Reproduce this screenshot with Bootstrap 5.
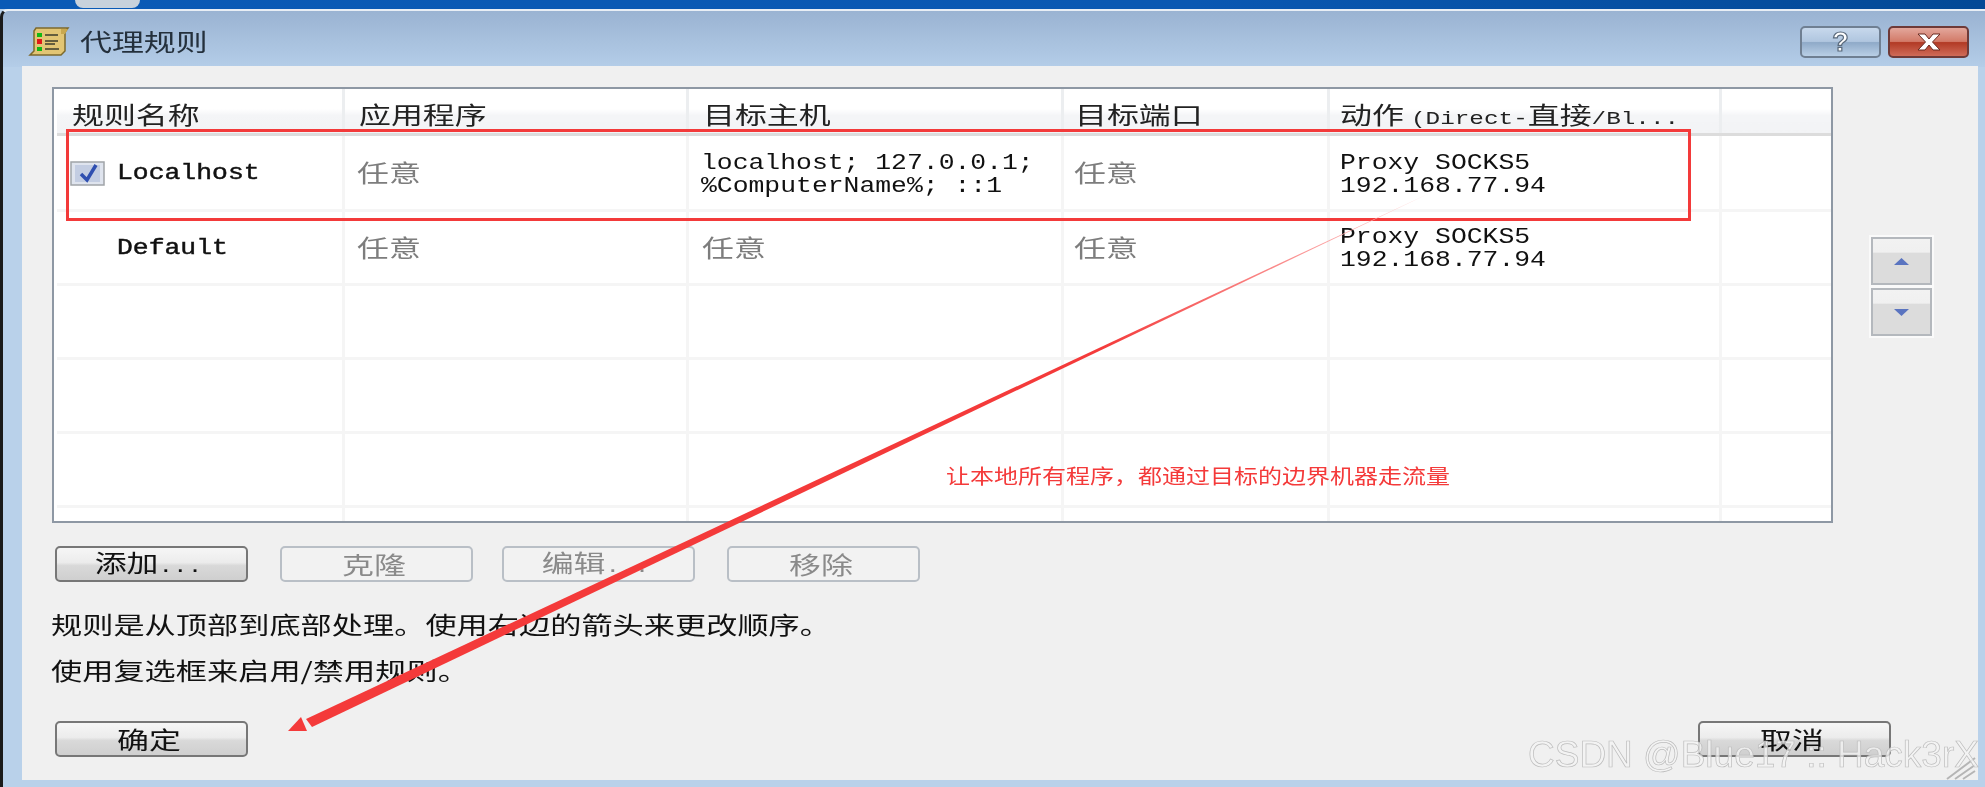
<!doctype html>
<html lang="zh"><head><meta charset="utf-8"><title>代理规则</title>
<link rel="stylesheet" href="https://cdn.jsdelivr.net/npm/bootstrap@5.3.0/dist/css/bootstrap.min.css">
<style>
html,body{margin:0;height:787px;overflow:hidden;background:#b9d1ea}
body{font-family:"Liberation Mono","Noto Sans CJK SC",monospace;color:#111}
.shot{position:relative;width:1985px;height:787px;overflow:hidden;filter:blur(.55px)}
.strip{height:9px;background:linear-gradient(90deg,#0a5ab6,#0a58b2 60%,#034996);position:relative}
.blob{position:absolute;left:75px;top:0;width:65px;height:8px;background:#c8d2dc;border-radius:0 0 10px 10px}
.winframe{height:778px;border-top:2px solid #e8eef5;border-left:3px solid #1a1a1a;border-top-left-radius:8px;background:linear-gradient(180deg,#9ab3d2 0,#b4cde8 56px,#b9d1ea 56px)}
.titlebar{height:55px;padding:16px 5px 0 25px}
.cn{font-family:"Noto Sans CJK SC","Liberation Sans",sans-serif;font-size:24px;line-height:24px}
.sx{display:inline-block;white-space:nowrap;transform:scaleX(1.33);transform-origin:0 50%}
.sxc{display:inline-block;white-space:nowrap;transform:scaleX(1.33)}
.lat{display:inline-block;white-space:nowrap;font-family:"Liberation Mono",monospace;font-size:22px;line-height:23px;transform:scaleX(1.2);transform-origin:0 50%;color:#111}
.headlat{font-family:"Liberation Mono",monospace;font-size:18.3px}
.title-ico{width:42px;height:29px;margin-right:10px}
.wintitle{width:127px;color:#24303c;margin-top:2px}
.capbtn{height:32px;border:2px solid #6f7f92;border-radius:5px;display:flex;align-items:center;justify-content:center;padding:0;font-family:"Liberation Sans",sans-serif}
.capbtn-help{width:81px;margin-right:7px;background:linear-gradient(180deg,#c7d8ec 0,#b0c6df 48%,#8faac8 52%,#b9cfe6 100%)}
.capbtn-close{width:81px;background:linear-gradient(180deg,#e3a79c 0,#d27a68 48%,#b23a25 52%,#cf6b58 100%);border-color:#6e3a38}
.capgroup{margin-top:-1px;margin-right:11px}
.q-mark{font-size:27px;font-weight:700;line-height:1;color:#fff;-webkit-text-stroke:1.2px #5a6a7c}
.panel{margin-left:19px;margin-right:7px;height:714px;background:#f0f0f0;padding:21px 0 0 30px;position:relative}
.listframe{width:1781px;height:436px;background:#fff;border:2px solid #8e98a4;border-bottom-width:2px;overflow:hidden;padding:0 2px 0 3px}
.rules{table-layout:fixed;width:1776px;margin:0;border-collapse:collapse;--bs-table-bg:transparent}
.rules th,.rules td{padding:0;vertical-align:middle;border:0;border-right:3px solid #f5f5f5;border-bottom:3px solid #f5f5f5;box-shadow:none}
.rules thead th{height:45px;font-weight:400;background:linear-gradient(180deg,#fff 0,#fff 45%,#f4f5f7 60%,#f2f3f5 100%);border-bottom:3px solid #dcdcdc;border-right:3px solid #eceef0;color:#222;vertical-align:top;padding-top:13px}
.rules tbody td{height:74px}
.rules tbody tr:first-child td{height:76px}
.rules tbody tr:last-child td{height:20px}
.rules td:last-child,.rules th:last-child{border-right:0}
.rules td.one-line{padding-top:3px}
.rules td.two-line{padding-top:7px}
.rules td.two-line-b{padding-top:6px}
.pad15{padding-left:15px!important}
.pad14{padding-left:14px!important}
.pad13{padding-left:13px!important}
.pad12{padding-left:12px!important}
.pad11{padding-left:11px!important}
.pad10{padding-left:10px!important}
.namecell{display:flex;align-items:center;padding-left:13px}
.chk{width:35px;height:25px;margin-right:12px;flex:none}
.chk-sp{width:47px;flex:none}
.strong-lat{-webkit-text-stroke:.45px #111}
.any{color:#7d7d7d}
.sidecol{margin-left:36px;margin-top:148px;padding:2px;background:#fafafa;height:103px;width:65px}
.spin{width:61px;height:48px;border:2px solid #b4b8bd;background:linear-gradient(180deg,#f2f2f2 0,#f0f0f0 30%,#dcdcdc 32%,#dcdcdc 100%);display:flex;align-items:center;justify-content:center;padding:0;border-radius:0}
.spin+.spin{margin-top:3px}
.spin svg{width:15px;height:7px}
.winbtn{width:193px;height:36px;padding:0 6px 0 0;border:2px solid #777;border-radius:5px;background:linear-gradient(180deg,#f6f6f6 0,#ececec 45%,#d9d9d9 55%,#cfcfcf 100%);color:#111;display:flex;align-items:center;justify-content:center;line-height:24px}
.winbtn:disabled{border-color:#b9bfc6;background:#f2f2f2;color:#8a8a8a;opacity:1}
.actions{margin-top:23px;padding-left:3px}
.gap-a{margin-right:32px}
.gap-b{margin-right:29px}
.gap-c{margin-right:32px}
.note{margin:0 0 0 -1px;height:24px;line-height:24px}
.note .sx{transform:scaleX(1.3)}
.tc{font-family:"Noto Sans CJK TC",sans-serif}
.note1{margin-top:30px}
.note2{margin-top:22px}
.bottomrow{margin-top:39px;padding:0 87px 0 3px}
.anno{position:absolute;left:946px;top:464px;font-family:"Noto Sans CJK SC",sans-serif;font-size:20px;line-height:24px;color:#f43a3a;white-space:nowrap;transform:scaleX(1.2);transform-origin:0 50%}
.redbox{position:absolute;left:66px;top:129px;width:1625px;height:92px;border:3px solid #f33a3a;pointer-events:none}
.overlay{position:absolute;left:0;top:0;pointer-events:none}
.wm{position:absolute;left:1528px;top:735px;font-family:"Liberation Sans",sans-serif;font-size:37px;line-height:40px;color:rgba(244,244,244,.75);-webkit-text-stroke:.7px #bdbdbd;white-space:nowrap}
</style></head>
<body>
<div class="shot">
  <div class="strip"><div class="blob"></div></div>
  <div class="winframe">
    <div class="titlebar d-flex align-items-start">
      <svg class="title-ico" viewBox="0 0 42 29" aria-hidden="true">
        <path d="M8 1H40L37 5V24L33 28H2L6 24V4Z" fill="#e2c574" stroke="#7d6a2c" stroke-width="1.500"/>
        <path d="M33 2h7l-3 5h-4z" fill="#c9a84f"/>
        <rect x="9" y="6" width="5" height="4" fill="#12b812"/><rect x="9" y="12" width="5" height="5" fill="#e01818"/><rect x="9" y="20" width="5" height="4" fill="#12b812"/>
        <path d="M17 8h13M17 14h13M17 17h10M17 22h14" stroke="#3c3c2c" stroke-width="1.600"/>
      </svg>
      <span class="cn wintitle"><span class="sx">代理规则</span></span>
      <div class="ms-auto d-flex capgroup">
        <button class="capbtn capbtn-help" type="button"><span class="q-mark">?</span></button>
        <button class="capbtn capbtn-close" type="button" aria-label="close">
          <svg width="30" height="20" viewBox="0 0 30 20"><path d="M4 2h7l4 5 4-5h7l-7.500 8 7.500 8h-7l-4-5-4 5H4l7.500-8z" fill="#fff" stroke="#6a2a20" stroke-width="1"/></svg>
        </button>
      </div>
    </div>
    <div class="panel">
      <div class="d-flex align-items-start">
        <div class="listframe">
          <table class="table rules">
            <colgroup><col style="width:286px"><col style="width:344px"><col style="width:375px"><col style="width:266px"><col style="width:392px"><col></colgroup>
            <thead><tr>
              <th class="cn" style="padding-left:15px"><span class="sx">规则名称</span></th>
              <th class="cn pad14"><span class="sx">应用程序</span></th>
              <th class="cn pad14"><span class="sx">目标主机</span></th>
              <th class="cn pad11"><span class="sx">目标端口</span></th>
              <th class="cn pad10"><span class="sx">动作&nbsp;<span class="headlat">(Direct-</span>直接<span class="headlat">/Bl...</span></span></th>
              <th></th>
            </tr></thead>
            <tbody>
              <tr>
                <td class="one-line"><div class="namecell">
                  <svg class="chk" viewBox="0 0 35 25" aria-hidden="true"><rect x="1" y="1" width="33" height="23" fill="#dfe4ee" stroke="#a0a4a8" stroke-width="1.500"/><rect x="5" y="4" width="25" height="17" fill="#c3cde2"/><path d="M11 13l6 6 9-15" fill="none" stroke="#2f4fb0" stroke-width="3.500"/></svg>
                  <span class="lat strong-lat">Localhost</span></div></td>
                <td class="cn any pad12"><span class="sx">任意</span></td>
                <td class="pad12 two-line"><span class="lat">localhost; 127.0.0.1;<br>%ComputerName%; ::1</span></td>
                <td class="cn any pad10"><span class="sx">任意</span></td>
                <td class="pad10 two-line"><span class="lat">Proxy SOCKS5<br>192.168.77.94</span></td>
                <td></td>
              </tr>
              <tr>
                <td class="one-line"><div class="namecell"><span class="chk-sp"></span><span class="lat strong-lat">Default</span></div></td>
                <td class="cn any pad12"><span class="sx">任意</span></td>
                <td class="cn any pad13"><span class="sx">任意</span></td>
                <td class="cn any pad10"><span class="sx">任意</span></td>
                <td class="pad10 two-line-b"><span class="lat">Proxy SOCKS5<br>192.168.77.94</span></td>
                <td></td>
              </tr>
              <tr><td></td><td></td><td></td><td></td><td></td><td></td></tr>
              <tr><td></td><td></td><td></td><td></td><td></td><td></td></tr>
              <tr><td></td><td></td><td></td><td></td><td></td><td></td></tr>
              <tr><td></td><td></td><td></td><td></td><td></td><td></td></tr>
            </tbody>
          </table>
        </div>
        <div class="sidecol">
          <button class="spin" type="button" aria-label="up"><svg viewBox="0 0 15 7"><path d="M7.500 0L15 7H0z" fill="#5a74c0"/></svg></button>
          <button class="spin" type="button" aria-label="down"><svg viewBox="0 0 15 7"><path d="M0 0H15L7.500 7z" fill="#5a74c0"/></svg></button>
        </div>
      </div>
      <div class="actions d-flex">
        <button class="winbtn cn gap-a" type="button"><span class="sxc">添加<span class="headlat">...</span></span></button>
        <button class="winbtn cn gap-b" type="button" disabled><span class="sxc">克隆</span></button>
        <button class="winbtn cn gap-c" type="button" disabled><span class="sxc">编辑<span class="headlat">...</span></span></button>
        <button class="winbtn cn" type="button" disabled><span class="sxc">移除</span></button>
      </div>
      <p class="note note1 cn"><span class="sx">规则是从顶部到底部处理<span class="tc">。</span>使用右边的箭头来更改顺序<span class="tc">。</span></span></p>
      <p class="note note2 cn"><span class="sx">使用复选框来启用/禁用规则<span class="tc">。</span></span></p>
      <div class="bottomrow d-flex justify-content-between">
        <button class="winbtn cn" type="button"><span class="sxc">确定</span></button>
        <button class="winbtn cn" type="button"><span class="sxc">取消</span></button>
      </div>
    </div>
  </div>
  <div class="redbox"></div>
  <svg class="overlay" width="1985" height="787" viewBox="0 0 1985 787" aria-hidden="true">
    <defs><linearGradient id="fade" gradientUnits="userSpaceOnUse" x1="1430" y1="193" x2="1100" y2="350"><stop offset="0" stop-color="#ffd0d0"/><stop offset="1" stop-color="#f43a3a"/></linearGradient></defs>
    <path d="M1430 193L312 727L306 719Z" fill="url(#fade)"/>
    <path d="M288 731L301 717L307 731Z" fill="#f43a3a"/>
    <g stroke="#b5b5b5" stroke-width="2"><path d="M1947 779L1975 758M1955 779L1975 765M1963 779L1975 771"/></g>
  </svg>
  <div class="anno">让本地所有程序，都通过目标的边界机器走流量</div>
  <div class="wm">CSDN @Blue17 :: Hack3rX</div>
</div>
<script src="https://cdn.jsdelivr.net/npm/bootstrap@5.3.0/dist/js/bootstrap.bundle.min.js"></script>
</body></html>
